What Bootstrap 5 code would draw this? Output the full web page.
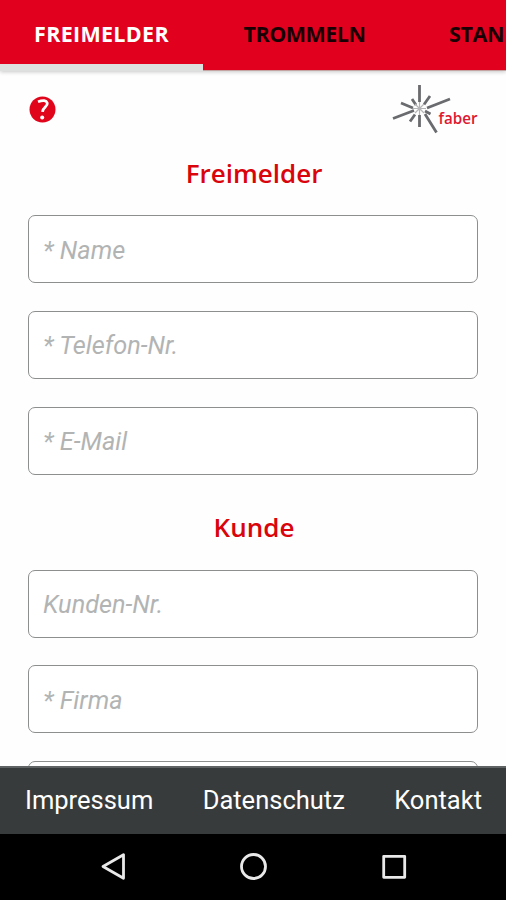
<!DOCTYPE html>
<html lang="de">
<head>
<meta charset="utf-8">
<meta name="viewport" content="width=device-width, initial-scale=1">
<title>Freimelder</title>
<link href="https://cdn.jsdelivr.net/npm/bootstrap@5.3.0/dist/css/bootstrap.min.css" rel="stylesheet">
<style>
html,body{height:100%}
body{font-family:Roboto,"Liberation Sans",sans-serif;background:#fefefe}
.screen{width:506px;height:900px}
.tabs{height:71px;background:#e2001f;border-bottom:1px solid #c4a5a3;box-shadow:0 1px 4px rgba(0,0,0,.22);z-index:1}
.tab-item{width:203px;flex:none;padding-top:18px;font:700 21.5px/32px "Open Sans","Noto Sans",sans-serif;color:#190004;border-bottom:0 solid #dde0df;text-decoration:none;white-space:nowrap}
.tab-item span{display:inline-block}
.tab-item.active{color:#fff;border-bottom-width:7px;height:71px}
.tab-cut{width:100px;padding-left:43px}
.t1{letter-spacing:.3px}.t2{letter-spacing:-.5px}.t3{letter-spacing:-.4px}
.form-area{min-height:0}
.toprow{height:69px;padding:13px 28px 0 29px}
.heading{font:600 26px/36px "Open Sans","Noto Sans",sans-serif;color:#d9040c;margin:0;padding-left:2px}
.h-first{padding-top:15px;height:75px}
.h-second{padding-top:34px;height:95px}
.fields{padding:0 28px;gap:27.8px}
.field{height:68px;flex:none;border:1.5px solid #8d8f8f;border-radius:7px;padding:2px 14px 0;font-size:25.3px;font-style:italic;background:#fff}
.field::placeholder{color:#b2b4b4;opacity:1}
.field:focus{box-shadow:none;border-color:#8d8f8f}
.footer-links{height:68px;background:#383b3b;border-top:2px solid #606363;padding:0 24px 2px 25px}
.footer-links a{color:#fff;text-decoration:none;font-size:25.5px;line-height:64px}
.sysbar{height:66px;background:#000}
</style>
</head>
<body>
<div class="screen d-flex flex-column overflow-hidden">
  <nav class="tabs d-flex flex-shrink-0 overflow-visible position-relative">
    <a class="tab-item active text-center" href="#"><span class="t1">FREIMELDER</span></a>
    <a class="tab-item text-center" href="#"><span class="t2">TROMMELN</span></a>
    <a class="tab-item tab-cut" href="#"><span class="t3">STAN</span></a>
  </nav>
  <main class="form-area flex-grow-1 overflow-hidden">
    <div class="toprow d-flex justify-content-between align-items-start">
      <svg width="27" height="52" viewBox="0 0 27 52" role="img" aria-label="Hilfe"><circle cx="13.5" cy="25.5" r="13" fill="#e1051c"/><path d="M9 17.800q7.800-3 9.300 1.300c.7 3.600-4.600 4.200-4.800 8.800" fill="none" stroke="#fff" stroke-width="2.800"/><circle cx="13.200" cy="33.500" r="2" fill="#fff"/></svg>
      <svg width="88" height="52" viewBox="390 84 88 52" role="img" aria-label="faber">
        <g stroke="#6a6b6e" stroke-width="2.800">
          <path d="M419.500 85v17M430 96l-6 8.500M450 99l-23 9M412 99l4 6M401 103l12 5M393 118.500l21-8M410 121.500l5-7M419.500 115v12M425 114l11.500 18.500M425 111l5.500 3"/>
        </g>
        <path d="M419.500 102v13M413 108.500h13M415 104l9 9M424 104l-9 9" stroke="#b5b5b7" stroke-width="1.200"/>
        <text x="438.500" y="123.500" textLength="39" lengthAdjust="spacingAndGlyphs" font-family="Open Sans, sans-serif" font-weight="600" font-size="15.500" fill="#df1730">faber</text>
      </svg>
    </div>
    <h1 class="heading h-first text-center">Freimelder</h1>
    <div class="fields d-flex flex-column">
      <input class="form-control field" placeholder="* Name">
      <input class="form-control field" placeholder="* Telefon-Nr.">
      <input class="form-control field" placeholder="* E-Mail">
    </div>
    <h2 class="heading h-second text-center">Kunde</h2>
    <div class="fields d-flex flex-column">
      <input class="form-control field" placeholder="Kunden-Nr.">
      <input class="form-control field" placeholder="* Firma">
      <input class="form-control field" aria-label="Weitere Angabe">
    </div>
  </main>
  <footer class="footer-links d-flex justify-content-between align-items-center flex-shrink-0">
    <a href="#">Impressum</a><a href="#">Datenschutz</a><a href="#">Kontakt</a>
  </footer>
  <div class="sysbar flex-shrink-0">
    <svg class="d-block" width="506" height="66" viewBox="0 834 506 66" fill="none" stroke="#e9e9e9" stroke-width="2.800" stroke-linejoin="round"><path d="M103 866.500l20.500-11.800v23.600z"/><circle cx="253.500" cy="866.500" r="12"/><rect x="383.700" y="856.300" width="21" height="21"/></svg>
  </div>
</div>
<script src="https://cdn.jsdelivr.net/npm/bootstrap@5.3.0/dist/js/bootstrap.bundle.min.js"></script>
</body>
</html>
